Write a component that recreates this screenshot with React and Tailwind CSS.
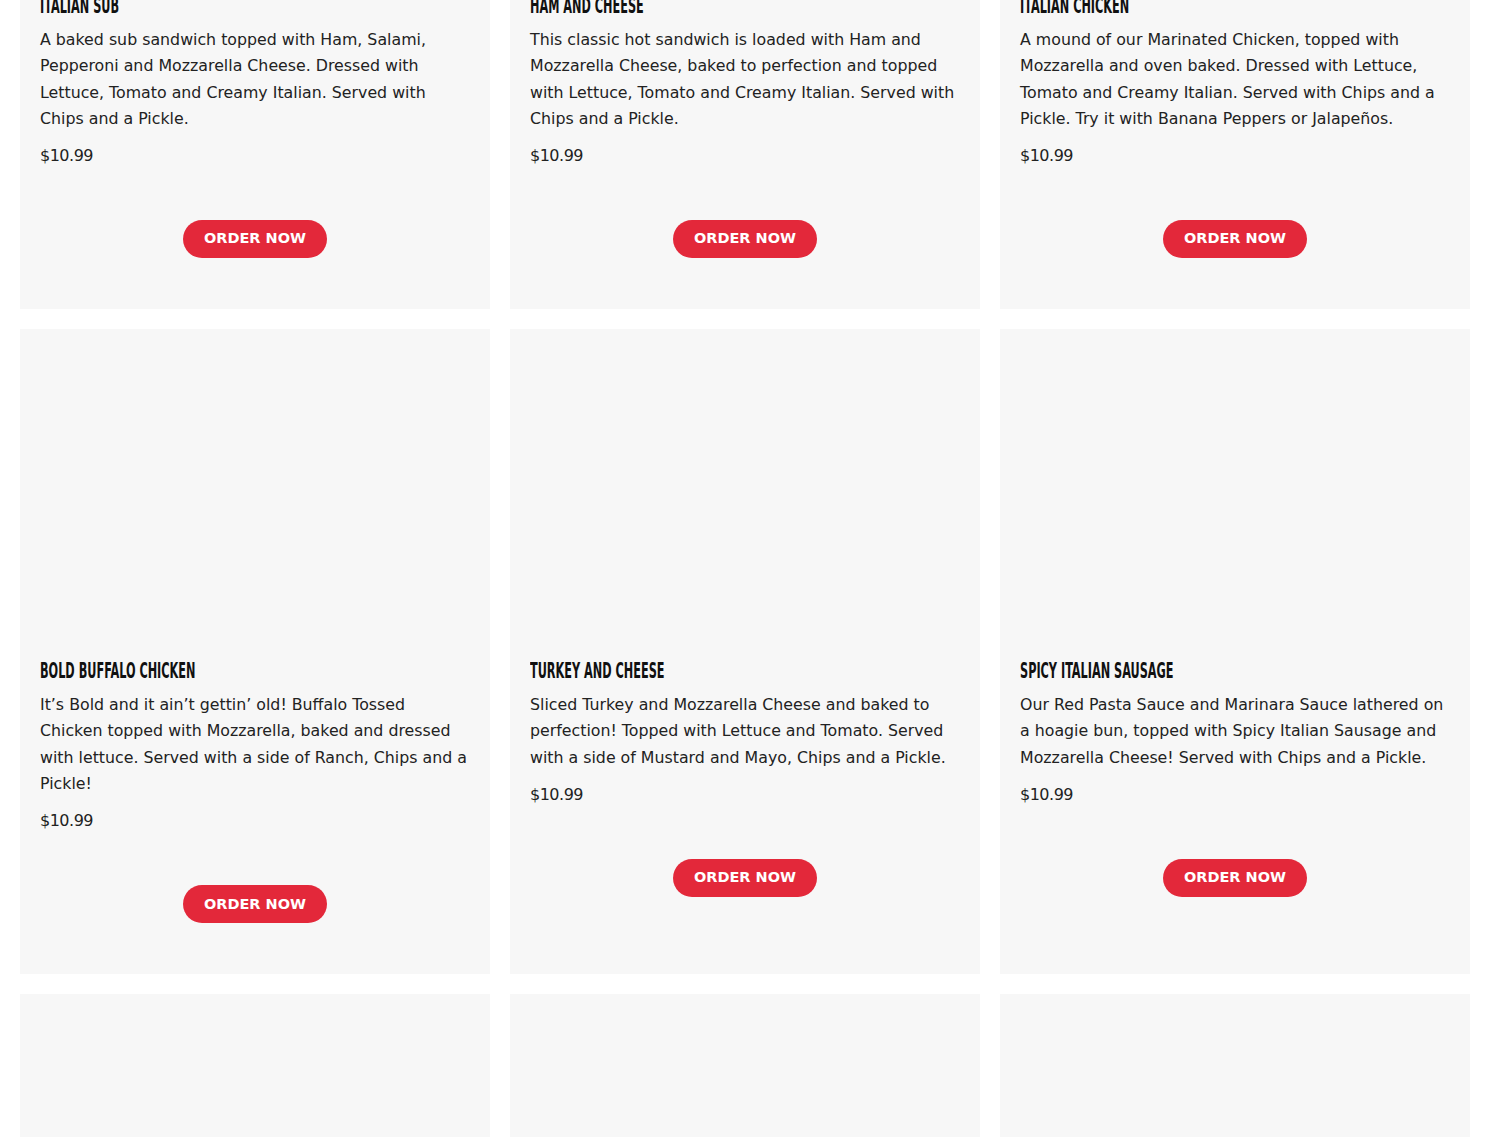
import React from 'react';

const items = [
    {
        name: 'Italian Sub',
        desc: 'A baked sub sandwich topped with Ham, Salami, Pepperoni and Mozzarella Cheese. Dressed with Lettuce, Tomato and Creamy Italian. Served with Chips and a Pickle.',
    },
    {
        name: 'Ham and Cheese',
        desc: 'This classic hot sandwich is loaded with Ham and Mozzarella Cheese, baked to perfection and topped with Lettuce, Tomato and Creamy Italian. Served with Chips and a Pickle.',
    },
    {
        name: 'Italian Chicken',
        desc: 'A mound of our Marinated Chicken, topped with Mozzarella and oven baked. Dressed with Lettuce, Tomato and Creamy Italian. Served with Chips and a Pickle. Try it with Banana Peppers or Jalapeños.',
    },
    {
        name: 'Bold Buffalo Chicken',
        desc: 'It’s Bold and it ain’t gettin’ old! Buffalo Tossed Chicken topped with Mozzarella, baked and dressed with lettuce. Served with a side of Ranch, Chips and a Pickle!',
    },
    {
        name: 'Turkey and Cheese',
        desc: 'Sliced Turkey and Mozzarella Cheese and baked to perfection! Topped with Lettuce and Tomato. Served with a side of Mustard and Mayo, Chips and a Pickle.',
    },
    {
        name: 'Spicy Italian Sausage',
        desc: 'Our Red Pasta Sauce and Marinara Sauce lathered on a hoagie bun, topped with Spicy Italian Sausage and Mozzarella Cheese! Served with Chips and a Pickle.',
    },
    {
        name: 'Meatball Sub',
        desc: 'Homemade Meatballs smothered in our Red Pasta Sauce and topped with Mozzarella Cheese, baked to perfection. Served with Chips and a Pickle.',
    },
    {
        name: 'Steak and Cheese',
        desc: 'Tender Steak and Mozzarella Cheese baked on a hoagie bun and topped with Lettuce, Tomato and Mayo. Served with Chips and a Pickle.',
    },
    {
        name: 'Veggie Sub',
        desc: 'Mushrooms, Green Peppers, Onions, Black Olives and Mozzarella Cheese, baked and dressed with Lettuce, Tomato and Creamy Italian. Served with Chips and a Pickle.',
    },
];

const MenuCard = ({ item }) => (
    <div className="bg-[#f7f7f7] px-5 pt-5 pb-[51px] flex flex-col">
        <div className="h-[300px] w-full" />
        <h3 className="mt-[10px] h-[24px] text-[22px] leading-[24px] font-bold uppercase text-[#111] whitespace-nowrap origin-left scale-x-[0.57] font-stretch-condensed [font-family:'DejaVu_Sans_Condensed','DejaVu_Sans',sans-serif]">
            {item.name}
        </h3>
        <p className="mt-[9px] text-[15.8px] leading-[26.3px] text-[#222]">{item.desc}</p>
        <p className="mt-[11px] text-[16px] leading-[26px] text-[#222] tracking-[-0.5px]">$10.99</p>
        <div className="mt-[51px] flex justify-center">
            <button className="h-[38px] w-[144px] rounded-full bg-[#e3283a] text-white text-[14.5px] font-bold uppercase">
                Order Now
            </button>
        </div>
    </div>
);

export default function App() {
    return (
        <div className="bg-white h-[1137px] overflow-hidden [font-family:'DejaVu_Sans',sans-serif]">
            <div className="ml-5 w-[1450px] -mt-[336px] grid grid-cols-3 gap-5">
                {items.map((item) => (
                    <MenuCard key={item.name} item={item} />
                ))}
            </div>
        </div>
    );
}
